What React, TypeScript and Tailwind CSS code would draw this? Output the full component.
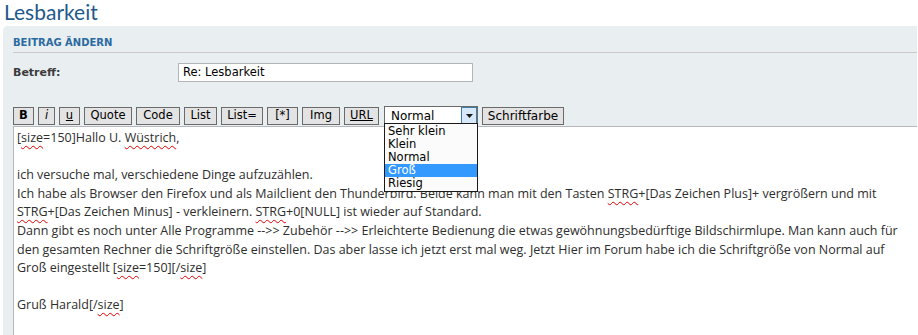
import React from 'react';

const W: React.FC<{ children: React.ReactNode }> = ({ children }) => (
  <span className="underline decoration-wavy decoration-[#e00000] decoration-1 underline-offset-[3px]">{children}</span>
);

const buttons = [
  { label: 'B', w: 'w-[21px]', cls: 'font-bold' },
  { label: 'i', w: 'w-[17px]', cls: 'italic' },
  { label: 'u', w: 'w-[21px]', cls: 'underline' },
  { label: 'Quote', w: 'w-[48px]', cls: '' },
  { label: 'Code', w: 'w-[44px]', cls: '' },
  { label: 'List', w: 'w-[33px]', cls: '' },
  { label: 'List=', w: 'w-[42px]', cls: '' },
  { label: '[*]', w: 'w-[31px]', cls: '' },
  { label: 'Img', w: 'w-[38px]', cls: '' },
  { label: 'URL', w: 'w-[35px]', cls: 'underline' },
];

const sizes = ['Sehr klein', 'Klein', 'Normal', 'Groß', 'Riesig'];

const App: React.FC = () => {
  return (
    <div className="relative w-[918px] h-[335px] overflow-hidden bg-white font-['DejaVu_Sans',sans-serif]">
      <h1 className="h-[26px] pl-[4px] text-[21px] leading-[24px] text-[#1f5a8c] font-['Lato',sans-serif]">
        Lesbarkeit
      </h1>

      <div className="ml-[3px] mr-[1px] h-[309px] bg-[#e9eef1] rounded-tl-[5px] pl-[10px]">
        <div className="pt-[11px] pb-[3px] border-b border-[#c9c9c9] text-[10px] font-bold leading-[12px] text-[#2a6aa0]">
          BEITRAG ÄNDERN
        </div>

        <div className="flex h-[29px] pt-[10px]">
          <div className="w-[165px] pt-[3px] text-[11px] font-bold leading-[13px] text-[#3b3b3b]">Betreff:</div>
          <div className="w-[295px] h-[19px] border border-[#b1b4b8] bg-white pl-[4px] text-[11.5px] leading-[17px] text-black">
            Re: Lesbarkeit
          </div>
        </div>

        <div className="flex items-center gap-[4px] pt-[23px] h-[44px]">
          {buttons.map((b, i) => (
            <div
              key={i}
              className={`${b.w} h-[18px] shrink-0 border border-[#6b6b6b] bg-[#e3e3e3] flex items-center justify-center text-[11.5px] text-black leading-none`}
            >
              <span className={b.cls}>{b.label}</span>
            </div>
          ))}
          <div className="ml-[1px] w-[94px] h-[19px] shrink-0 border border-[#6b6b6b] bg-white flex items-center pl-[6px] text-[12px] text-black">
            <span className="flex-1">Normal</span>
            <div className="w-[16px] h-[17px] border border-[#3d7bab] bg-[#d7e9f8] flex items-center justify-center">
              <svg width="7" height="4" viewBox="0 0 7 4">
                <path d="M0 0 H7 L3.5 4 Z" fill="#1a1a1a" />
              </svg>
            </div>
          </div>
          <div className="w-[82px] h-[18px] shrink-0 border border-[#6b6b6b] bg-[#e3e3e3] flex items-center justify-center text-[12px] text-black">
            Schriftfarbe
          </div>
        </div>

        <div className="h-[209px] border-t border-l border-[#b5b9bd] bg-white pl-[3px] pt-[2px] text-[12.5px] leading-[18.6px] text-[#2e2e2e] font-['Open_Sans',sans-serif] whitespace-nowrap">
          <div>[<W>size</W>=150]Hallo U. <W>Wüstrich</W>,</div>
          <div>&nbsp;</div>
          <div>ich versuche mal, verschiedene Dinge aufzuzählen.</div>
          <div>Ich habe als Browser den Firefox und als Mailclient den Thunderbird. Beide kann man mit den Tasten <W>STRG</W>+[Das Zeichen Plus]+ vergrößern und mit</div>
          <div><W>STRG</W>+[Das Zeichen Minus] - verkleinern. <W>STRG</W>+0[NULL] ist wieder auf Standard.</div>
          <div>Dann gibt es noch unter Alle Programme --&gt;&gt; Zubehör --&gt;&gt; Erleichterte Bedienung die etwas gewöhnungsbedürftige Bildschirmlupe. Man kann auch für</div>
          <div>den gesamten Rechner die Schriftgröße einstellen. Das aber lasse ich jetzt erst mal weg. Jetzt Hier im Forum habe ich die Schriftgröße von Normal auf</div>
          <div>Groß eingestellt [<W>size</W>=150][/<W>size</W>]</div>
          <div>&nbsp;</div>
          <div>Gruß Harald[/<W>size</W>]</div>
        </div>
      </div>

      <div className="absolute left-[384px] top-[123px] w-[94px] border border-[#1a1a1a] bg-[#fbfbfb] py-[1px] text-[11.5px] leading-[13px] text-black">
        {sizes.map((s) => (
          <div key={s} className={`pl-[3px] ${s === 'Groß' ? 'bg-[#3399ff] text-white' : ''}`}>
            {s}
          </div>
        ))}
      </div>
    </div>
  );
};

export default App;
